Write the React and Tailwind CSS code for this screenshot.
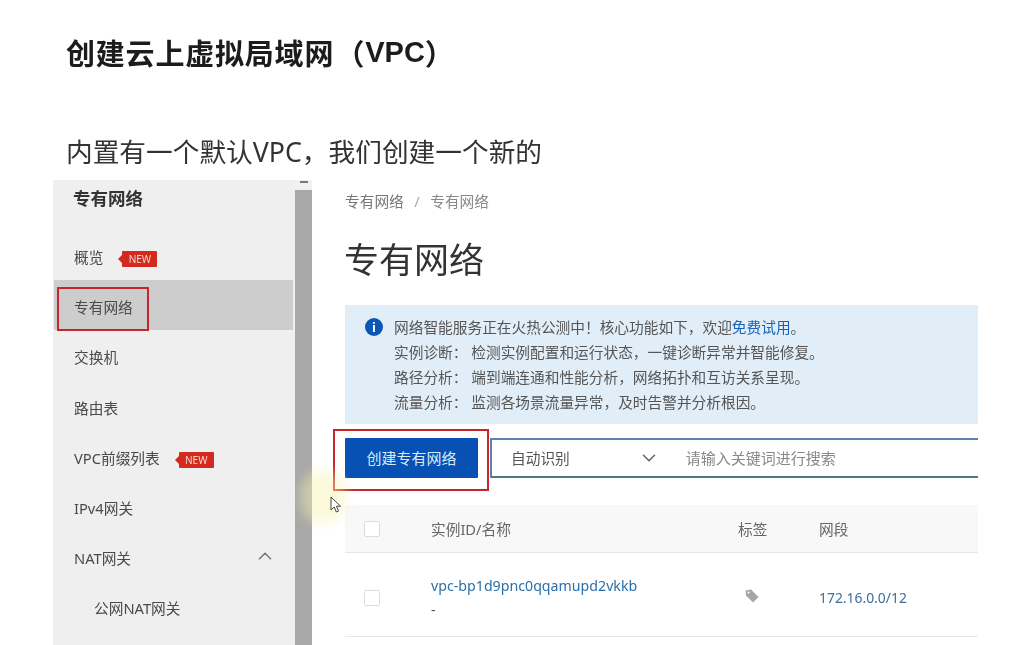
import React from "react";
import { ChevronDown, ChevronUp } from "lucide-react";

const font = "font-['Noto_Sans','Noto_Sans_CJK_SC',sans-serif]";

function NewTag() {
  return (
    <span className="relative ml-[19px] mt-[4px] flex h-[16px] w-[35px] items-center justify-center rounded-[1px] bg-[#d22a1c] text-[10px] leading-none text-[#f6d5cf]">
      NEW
      <span className="absolute left-[-4px] top-[4px] h-0 w-0 border-y-[4px] border-r-[4px] border-y-transparent border-r-[#d22a1c]" />
    </span>
  );
}

function NavItem({ label, tag, active, sub, chevron, outlined }) {
  return (
    <div className={`relative flex h-[50.2px] items-center pt-[5px] ${active ? "bg-[#cdcdcd]" : ""} ${sub ? "pl-[40px]" : "pl-[20px]"} pr-[19px] text-[14.7px] text-[#4a4a4a]`}>
      <span>{label}</span>
      {tag && <NewTag />}
      {chevron && <ChevronUp className="ml-auto mr-[-2px] mt-[-5px] h-[22px] w-[22px] text-[#777]" strokeWidth={1.7} />}
      {outlined && <span className="absolute left-[3px] top-[7px] h-[44px] w-[92px] border-2 border-[#c8242b]" />}
    </div>
  );
}

function Checkbox() {
  return <span className="h-[16px] w-[16px] rounded-[2px] border border-[#dcdcdc] bg-white" />;
}

export default function App() {
  return (
    <div className={`${font} relative h-[645px] w-[1009px] overflow-hidden bg-white`}>
      <div className="pl-[66px] pt-[33px] blur-[0.35px]">
        <h1 className="flex h-[38px] items-center font-['Noto_Sans_CJK_SC',sans-serif] text-[29px] font-bold leading-[38px] tracking-[0.8px] text-[#1c1c1c]">
          <span>创建云上虚拟局域网</span>
          <span className="w-[31px] text-right">（</span>
          <span className="font-['Liberation_Sans',sans-serif] tracking-normal">VPC</span>
          <span className="w-[17px]">）</span>
        </h1>
        <p className="mt-[63px] text-[26.7px] leading-[36px] text-[#333]">内置有一个默认VPC，我们创建一个新的</p>
      </div>

      <div className="ml-[53px] mt-[10px] flex h-[465px] w-[925px] blur-[0.35px]">
        <aside className="w-[240px] shrink-0 bg-[#efefef]">
          <div className="flex h-[36px] items-center pl-[20px] text-[17.5px] font-bold text-[#333]">专有网络</div>
          <div className="h-[13.5px]" />
          <div className="pl-px">
            <NavItem label="概览" tag />
            <NavItem label="专有网络" active outlined />
            <NavItem label="交换机" />
            <NavItem label="路由表" />
            <NavItem label="VPC前缀列表" tag />
            <NavItem label="IPv4网关" />
            <NavItem label="NAT网关" chevron />
            <NavItem label="公网NAT网关" sub />
          </div>
        </aside>
        <div className="flex w-[19px] shrink-0 flex-col bg-[#f0f0f0] pl-[2px]">
          <div className="mx-auto mt-[1px] h-[2px] w-[8px] bg-[#777]" />
          <div className="mt-[7px] flex-1 bg-[#a8a8a8]" />
        </div>

        <main className="min-w-0 flex-1 pl-[33px]">
          <div className="flex h-[43px] items-center gap-[10.5px] text-[14.7px] text-[#777]">
            <span>专有网络</span>
            <span className="text-[#aaa]">/</span>
            <span className="text-[#888]">专有网络</span>
          </div>
          <h2 className="-ml-px mt-[13px] text-[35px] leading-[48px] text-[#333]">专有网络</h2>

          <div className="mt-[21px] flex h-[119px] bg-[#e1eef8] pl-[20px] pt-[10px]">
            <span className="mt-[3px] flex h-[18px] w-[18px] shrink-0 items-center justify-center rounded-full bg-[#0b55b5] text-[13px] font-bold leading-none text-white">i</span>
            <div className="ml-[11px] text-[14.7px] leading-[25px] text-[#555]">
              <div>网络智能服务正在火热公测中！核心功能如下，欢迎<span className="text-[#1463b8]">免费试用</span>。</div>
              <div>实例诊断：&nbsp;检测实例配置和运行状态，一键诊断异常并智能修复。</div>
              <div>路径分析：&nbsp;端到端连通和性能分析，网络拓扑和互访关系呈现。</div>
              <div>流量分析：&nbsp;监测各场景流量异常，及时告警并分析根因。</div>
            </div>
          </div>

          <div className="mt-[14px] flex h-[40px]">
            <button className="relative h-[40px] w-[133px] rounded-[1px] bg-[#0750b4] text-[15px] text-[#d8ecf8]">
              创建专有网络
              <span className="absolute left-[-12px] top-[-9px] h-[62px] w-[156px] border-2 border-[#c8242b]" />
            </button>
            <div className="ml-[12px] flex flex-1 items-center border-y-2 border-l-2 border-t-[#5d82ad] border-b-[#4f7a80] border-l-[#5d82ad] pl-[19px] text-[14.7px]">
              <span className="text-[#555]">自动识别</span>
              <ChevronDown className="ml-[68px] h-[22px] w-[22px] text-[#666]" strokeWidth={1.7} />
              <span className="ml-[26px] text-[15px] text-[#888]">请输入关键词进行搜索</span>
            </div>
          </div>

          <div className="mt-[27px] flex h-[48px] items-center border-b border-[#e6e6e6] bg-[#f8f8f8] pt-[1px] text-[14.7px] text-[#666]">
            <span className="ml-[19px] flex"><Checkbox /></span>
            <span className="ml-[51px] w-[307px]">实例ID/名称</span>
            <span className="w-[81px]">标签</span>
            <span>网段</span>
          </div>
          <div className="flex h-[84px] items-center border-b border-[#e8e8e8] pt-[7px] text-[14px]">
            <span className="ml-[19px] flex"><Checkbox /></span>
            <div className="ml-[51px] w-[307px] text-[14.2px] leading-[24px]">
              <div className="text-[#2a6fa8]">vpc-bp1d9pnc0qqamupd2vkkb</div>
              <div className="text-[#555]">-</div>
            </div>
            <span className="w-[81px]">
              <svg viewBox="0 0 16 16" className="-mt-[4px] ml-[6px] h-[16px] w-[16px]">
                <path d="M1.5 2.5 7 1.5l7.5 7.5-5.5 5.5L2 7.5z" fill="#a6a6a6" />
                <circle cx="4.5" cy="4.5" r="1.1" fill="#fff" />
              </svg>
            </span>
            <span className="text-[13.9px] text-[#3f6d9e]">172.16.0.0/12</span>
          </div>
        </main>
      </div>

      {/* recording cursor with its yellow highlight */}
      <div className="pointer-events-none absolute left-[300px] top-[470px] h-[54px] w-[46px] rounded-full bg-[#f8f3b0] opacity-45 blur-[6px]" />
      <svg viewBox="0 0 12 18" className="absolute left-[330px] top-[496px] h-[18px] w-[12px]">
        <path d="M1 1v13l3.2-3 2.2 5 2.2-1-2.2-4.8H10.5z" fill="#fff" stroke="#444" strokeWidth="1" />
      </svg>
    </div>
  );
}
